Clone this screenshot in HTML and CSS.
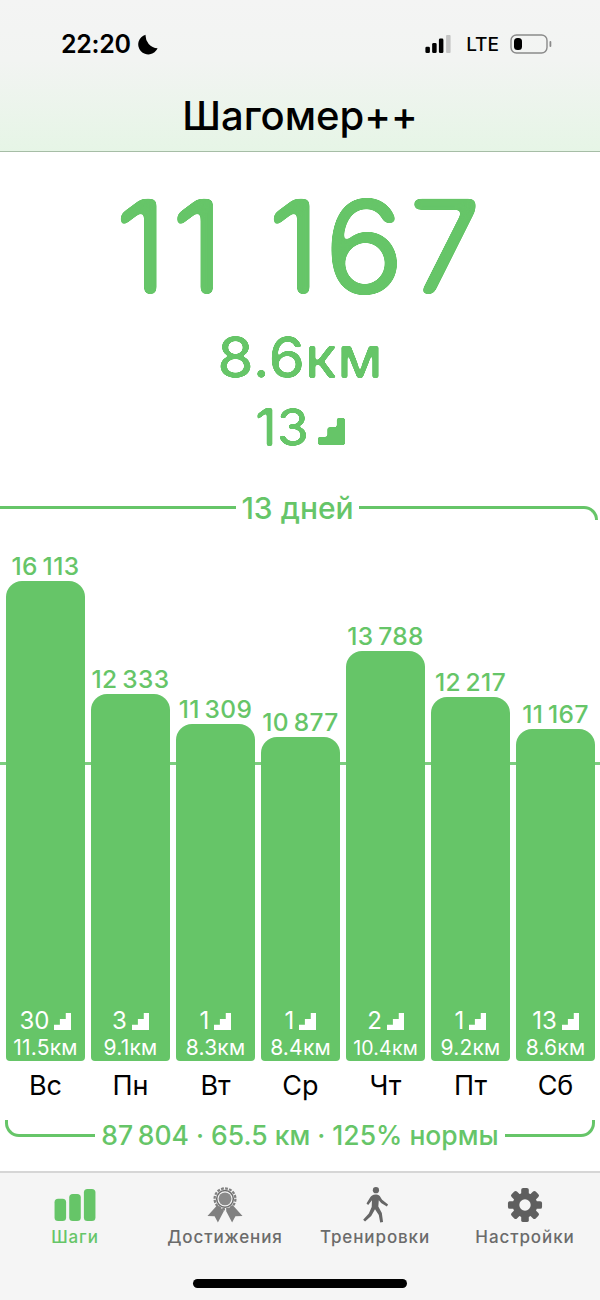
FILE: index.html
```html
<!DOCTYPE html>
<html lang="ru">
<head>
<meta charset="utf-8">
<title>Шагомер++</title>
<link rel="stylesheet" href="styles.css">
</head>
<body>
<svg class="defs" width="0" height="0" aria-hidden="true">
  <symbol id="stairs" viewBox="0 0 26 26"><path d="M0 26V18H9V9H18V0H26V26Z"/></symbol>
  <filter id="round-lg" color-interpolation-filters="sRGB" x="-5%" y="-5%" width="110%" height="110%"><feGaussianBlur stdDeviation="3"/><feColorMatrix values="1 0 0 0 0 0 1 0 0 0 0 0 1 0 0 0 0 0 14 -6"/></filter>
  <filter id="round-md" color-interpolation-filters="sRGB" x="-5%" y="-5%" width="110%" height="110%"><feGaussianBlur stdDeviation="1"/><feColorMatrix values="1 0 0 0 0 0 1 0 0 0 0 0 1 0 0 0 0 0 6 -2.500"/></filter>
</svg>
<div class="app">
  <header class="header">
    <div class="status">
      <div class="status-left">
        <span class="time">22:20</span>
        <svg class="moon" viewBox="0 0 20 20"><path d="M8.2 0.6A9.6 9.6 0 1 0 19.6 13.6 A12 12 0 0 1 8.2 0.6Z"/></svg>
      </div>
      <div class="status-right">
        <svg class="signal" viewBox="0 0 28 20"><rect x="0" y="13" width="5" height="7" rx="1.5" fill="#000"/><rect x="7.500" y="9" width="5" height="11" rx="1.500" fill="#000"/><rect x="15" y="4" width="5" height="16" rx="1.500" fill="#000"/><rect x="23" y="0" width="5" height="20" rx="1" fill="#c4c4c4"/></svg>
        <span class="lte">LTE</span>
        <svg class="battery" viewBox="0 0 42 20"><rect x="1" y="1" width="36" height="18" rx="5.500" fill="none" stroke="#8a8a8a" stroke-width="1.400"/><rect x="4" y="4" width="8" height="12" rx="3.500" fill="#000"/><rect x="39.500" y="7" width="1.800" height="6" rx="0.900" fill="#8a8a8a"/></svg>
      </div>
    </div>
    <h1 class="title">Шагомер++</h1>
  </header>

  <main class="main">
    <section class="hero">
      <div class="steps">11 167</div>
      <div class="distance">8.6км</div>
      <div class="floors">13 <svg class="stair stair-lg"><use href="#stairs"/></svg></div>
    </section>

    <div class="frame-top">
      <span class="line"></span>
      <span class="frame-label frame-label-top">13 дней</span>
      <span class="line line-corner"></span>
    </div>

    <section class="chart">
      <div class="goal"></div>
      <div class="col">
        <div class="val">16&#8201;113</div>
        <div class="bar" style="height:480px">
          <div class="b-floors">30 <svg class="stair"><use href="#stairs"/></svg></div>
          <div class="b-km">11.5км</div>
        </div>
      </div>
      <div class="col">
        <div class="val">12&#8201;333</div>
        <div class="bar" style="height:367px">
          <div class="b-floors">3 <svg class="stair"><use href="#stairs"/></svg></div>
          <div class="b-km">9.1км</div>
        </div>
      </div>
      <div class="col">
        <div class="val">11&#8201;309</div>
        <div class="bar" style="height:337px">
          <div class="b-floors">1 <svg class="stair"><use href="#stairs"/></svg></div>
          <div class="b-km">8.3км</div>
        </div>
      </div>
      <div class="col">
        <div class="val">10&#8201;877</div>
        <div class="bar" style="height:324px">
          <div class="b-floors">1 <svg class="stair"><use href="#stairs"/></svg></div>
          <div class="b-km">8.4км</div>
        </div>
      </div>
      <div class="col">
        <div class="val">13&#8201;788</div>
        <div class="bar" style="height:410px">
          <div class="b-floors">2 <svg class="stair"><use href="#stairs"/></svg></div>
          <div class="b-km b-km-sm">10.4км</div>
        </div>
      </div>
      <div class="col">
        <div class="val">12&#8201;217</div>
        <div class="bar" style="height:364px">
          <div class="b-floors">1 <svg class="stair"><use href="#stairs"/></svg></div>
          <div class="b-km">9.2км</div>
        </div>
      </div>
      <div class="col">
        <div class="val">11&#8201;167</div>
        <div class="bar" style="height:332px">
          <div class="b-floors">13 <svg class="stair"><use href="#stairs"/></svg></div>
          <div class="b-km">8.6км</div>
        </div>
      </div>
    </section>

    <div class="days">
      <span>Вс</span><span>Пн</span><span>Вт</span><span>Ср</span><span>Чт</span><span>Пт</span><span>Сб</span>
    </div>

    <div class="frame-bottom">
      <span class="bline bline-left"></span>
      <span class="frame-label frame-label-bottom">87&#8201;804 · 65.5 км · 125% нормы</span>
      <span class="bline bline-right"></span>
    </div>
  </main>

  <nav class="tabbar">
    <div class="tabs">
      <div class="tab tab-active">
        <svg class="tab-icon" viewBox="-3 -1.500 54 39"><rect x="1" y="11" width="13" height="25" rx="4"/><rect x="17.500" y="5.500" width="13" height="30.500" rx="4"/><rect x="34" y="0" width="13" height="36" rx="4"/></svg>
        <span>Шаги</span>
      </div>
      <div class="tab">
        <svg class="tab-icon" viewBox="0 0 38 38"><path d="M11 19L0.500 30.500 8 31 11.500 37.500 18 25ZM27 19L37.500 30.500 30 31 26.500 37.500 20 25Z" fill="#808080"/><circle cx="19" cy="12.500" r="11" fill="none" stroke="#808080" stroke-width="2.400" stroke-dasharray="3 1.300"/><circle cx="19" cy="12.500" r="8.800" fill="#f5f5f5" stroke="#6e6e6e" stroke-width="1.600"/><circle cx="19" cy="12.500" r="6.800" fill="#8a8a8a"/></svg>
        <span>Достижения</span>
      </div>
      <div class="tab">
        <svg class="tab-icon" viewBox="0 0 38 38"><circle cx="20" cy="3.300" r="3.300" fill="#666"/><path d="M19.500 8C16.500 8 15 9.500 13.500 11.500L10 17.500 11.800 19 15.800 14 15.500 21 12.500 28 6.500 34.500 8.500 36.500 15 30.500 19 23.500 23 29.500 24.500 37.500 27.500 37 26.200 27.500 22.500 20.500 23 14 25.500 16.800 31.500 20.500 32.800 18.500 26.500 13.500 24 9.500C22.800 8.500 21 8 19.500 8Z" fill="#666"/></svg>
        <span>Тренировки</span>
      </div>
      <div class="tab">
        <svg class="tab-icon" viewBox="0 0 38 38"><g fill="#5f5f5f"><rect x="15" y="1" width="8" height="36" rx="2"/><rect x="15" y="1" width="8" height="36" rx="2" transform="rotate(45 19 19)"/><rect x="15" y="1" width="8" height="36" rx="2" transform="rotate(90 19 19)"/><rect x="15" y="1" width="8" height="36" rx="2" transform="rotate(135 19 19)"/></g><circle cx="19" cy="19" r="9.500" fill="none" stroke="#5f5f5f" stroke-width="7"/><circle cx="19" cy="19" r="6" fill="#f5f5f5"/></svg>
        <span>Настройки</span>
      </div>
    </div>
    <div class="home"></div>
  </nav>
</div>
</body>
</html>
```
FILE: styles.css
```css
* { box-sizing: border-box; }
html, body { margin: 0; padding: 0; }
body { width: 600px; height: 1300px; overflow: hidden; background: #fff; font-family: Inter, "Liberation Sans", sans-serif; color: #000; }
.defs { position: absolute; }
.app { width: 600px; height: 1300px; display: flex; flex-direction: column; }

.header { height: 152px; flex: none; background: linear-gradient(180deg, #f4f4f4 0%, #f2f4f2 40%, #e6f5e6 100%); border-bottom: 1.5px solid #a6bda6; display: flex; flex-direction: column; }
.status { height: 90px; padding: 26px 48px 0 61px; display: flex; justify-content: space-between; align-items: flex-start; }
.status-left { display: flex; align-items: center; gap: 6px; height: 36px; }
.time { font-size: 25px; font-weight: 600; letter-spacing: -0.3px; }
.moon { width: 21px; height: 21px; fill: #000; }
.status-right { display: flex; align-items: center; height: 36px; gap: 0; }
.signal { margin-right: 14px; width: 28px; height: 18px; }
.lte { font-size: 19px; font-weight: 500; margin-right: 11px; }
.battery { width: 42px; height: 20px; }
.title { margin: 0; font-size: 40px; font-weight: 500; text-align: center; line-height: 52px; }

.main { flex: 1; color: #66c568; display: flex; flex-direction: column; }
.hero { display: flex; flex-direction: column; align-items: center; padding-top: 12px; }
.steps { font-size: 130px; line-height: 166px; font-weight: 400; letter-spacing: 3.5px; filter: url(#round-lg); }
.distance { font-size: 58px; line-height: 70px; font-weight: 500; margin-top: -8px; filter: url(#round-md); }
.floors { font-size: 52px; line-height: 60px; font-weight: 500; display: flex; align-items: center; gap: 9px; margin-top: 6px; filter: url(#round-md); }
.stair { width: 17px; height: 17px; fill: currentColor; }
.stair-lg { width: 27px; height: 27px; margin-top: 6px; }

.frame-top { display: flex; align-items: flex-start; gap: 5px; margin-top: 33px; height: 60px; padding-right: 2px; }
.line { flex: 1; height: 3px; background: #66c568; margin-top: 15px; }
.line-corner { height: 14px; background: none; border-top: 3px solid #66c568; border-right: 3px solid #66c568; border-top-right-radius: 14px; }
.frame-label { font-size: 26.5px; line-height: 34px; font-weight: 500; white-space: nowrap; }
.frame-label-top { font-size: 30px; }
.frame-label-bottom { line-height: 30px; }

.chart { position: relative; height: 510px; display: grid; grid-template-columns: repeat(7, 79px); gap: 6px; padding: 0 6px; align-items: end; }
.goal { position: absolute; left: 0; right: 0; top: 211px; height: 3px; background: #66c568; opacity: 0.85; }
.col { position: relative; display: flex; flex-direction: column; align-items: center; }
.val { font-size: 24.5px; line-height: 30px; font-weight: 500; letter-spacing: 0.4px; white-space: nowrap; }
.bar { width: 79px; background: #66c568; border-radius: 16px 16px 4px 4px; color: #fff; display: flex; flex-direction: column; justify-content: flex-end; align-items: center; padding-bottom: 0; }
.b-floors { display: flex; align-items: center; gap: 5px; font-size: 24px; line-height: 28px; }
.b-km { font-size: 21px; line-height: 26px; letter-spacing: 0.2px; }
.b-km-sm { font-size: 19.5px; }

.days { display: grid; grid-template-columns: repeat(7, 79px); gap: 6px; padding: 0 6px; font-size: 27px; line-height: 32px; color: #000; text-align: center; margin-top: 9px; }

.frame-bottom { display: flex; align-items: flex-start; gap: 6px; padding: 0 5px; margin-top: 18px; }
.bline { flex: 1; height: 17px; border-bottom: 3px solid #66c568; }
.bline-left { border-left: 3px solid #66c568; border-bottom-left-radius: 14px; }
.bline-right { border-right: 3px solid #66c568; border-bottom-right-radius: 14px; }

.tabbar { height: 129px; flex: none; background: #f5f5f5; border-top: 2px solid #d6d6d6; display: flex; flex-direction: column; }
.tabs { display: grid; grid-template-columns: 150px 150px 150px 150px; padding-top: 14px; }
.tab { display: flex; flex-direction: column; align-items: center; color: #6b6b6b; font-size: 17px; font-weight: 500; letter-spacing: 0.9px; gap: 4px; }
.tab-icon { height: 36px; width: 48px; }
.tab-active { color: #66c568; }
.tab-active .tab-icon { fill: #66c568; }
.home { width: 214px; height: 9px; border-radius: 5px; background: #000; margin: 32px auto 0; }
```
